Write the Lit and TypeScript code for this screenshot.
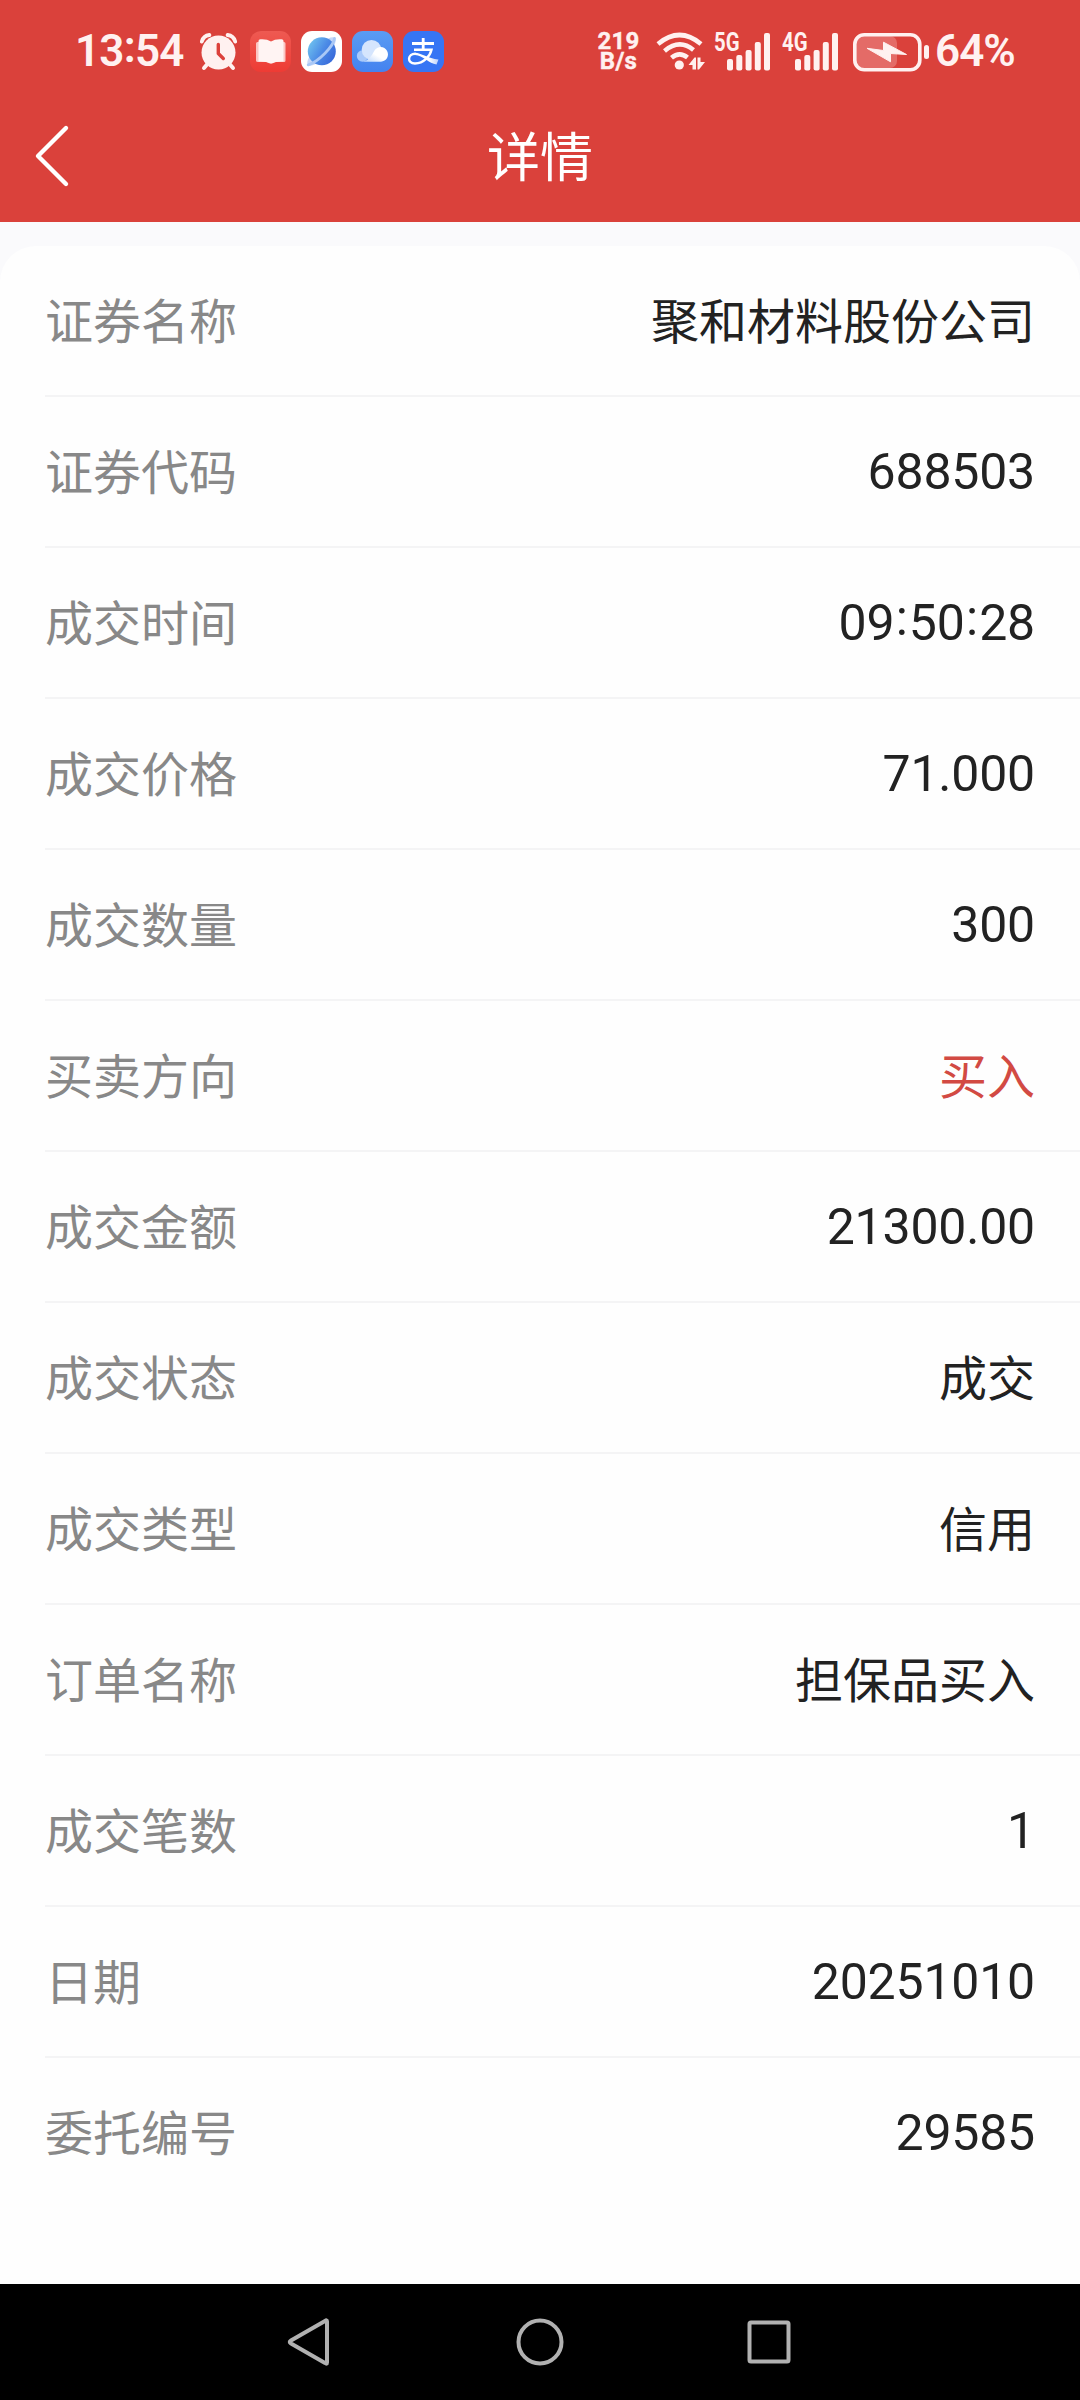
import { LitElement, html, css, svg } from "lit";
import { customElement, property } from "lit/decorators.js";
import { classMap } from "lit/directives/class-map.js";

interface Field {
  label: string;
  value: string;
  kind?: "number" | "buy";
}

const FIELDS: Field[] = [
  { label: "证券名称", value: "聚和材料股份公司" },
  { label: "证券代码", value: "688503", kind: "number" },
  { label: "成交时间", value: "09:50:28", kind: "number" },
  { label: "成交价格", value: "71.000", kind: "number" },
  { label: "成交数量", value: "300", kind: "number" },
  { label: "买卖方向", value: "买入", kind: "buy" },
  { label: "成交金额", value: "21300.00", kind: "number" },
  { label: "成交状态", value: "成交" },
  { label: "成交类型", value: "信用" },
  { label: "订单名称", value: "担保品买入" },
  { label: "成交笔数", value: "1", kind: "number" },
  { label: "日期", value: "20251010", kind: "number" },
  { label: "委托编号", value: "29585", kind: "number" },
];

// Splits a value so that each colon can be raised to the middle of the digits.
const withRaisedColons = (text: string) =>
  text.split(/(:)/).map((part) => (part === ":" ? html`<span class="colon">:</span>` : part));

@customElement("status-bar")
class StatusBar extends LitElement {
  static styles = css`
    :host {
      display: flex;
      justify-content: space-between;
      align-items: center;
      box-sizing: border-box;
      height: 91px;
      padding: 12px 65px 0 75px;
      color: #fff1f0;
      font-family: Roboto, "Liberation Sans", sans-serif;
      font-weight: 600;
    }
    .group {
      display: flex;
      align-items: center;
    }
    svg {
      display: block;
      flex: none;
    }
    .time {
      width: 125px;
      padding-bottom: 2px;
      font-size: 44px;
      line-height: 50px;
      letter-spacing: -0.8px;
      white-space: nowrap;
    }
    .colon {
      vertical-align: 4px;
      line-height: 1;
    }
    .apps {
      display: flex;
      gap: 10px;
      margin-left: 13px;
    }
    .speed {
      width: 43px;
      font-size: 24px;
      font-weight: 700;
      line-height: 20px;
      text-align: center;
      letter-spacing: 0.3px;
      padding-bottom: 1px;
      -webkit-text-stroke: 0.4px #fff1f0;
    }
    .wifi {
      margin-left: 16px;
    }
    .cell {
      margin: -10px 0 0 8px;
    }
    .cell + .cell {
      margin-left: 12px;
    }
    .battery {
      margin-left: 14px;
    }
    .percent {
      width: 80px;
      margin-left: 6px;
      padding-bottom: 1px;
      font-size: 44px;
      line-height: 52px;
      letter-spacing: -1px;
      white-space: nowrap;
    }
  `;

  private signal(name: string) {
    return html`<svg class="cell" width="56" height="50" viewBox="0 -10 56 50">
      <text x="0" y="18.800" font-size="25" font-weight="700" fill="#fff1f0" textLength="25.500" lengthAdjust="spacingAndGlyphs">${name}</text>
      ${[
        [13, 27],
        [22.3, 23],
        [31.6, 18],
        [40.8, 10],
        [50, 1],
      ].map(([x, y]) => svg`<rect x=${x} y=${y} width="6" height=${38.5 - y} rx="2" fill="#fff1f0"/>`)}
    </svg>`;
  }

  render() {
    return html`
      <div class="group">
        <span class="time">13<span class="colon">:</span>54</span>
        <svg width="37" height="38" viewBox="0 0 37 38" fill="none">
          <circle cx="18.5" cy="19.5" r="17" fill="#fff1f0" />
          <path d="M1.8 8.6A9 9 0 0 1 9.4 2M35.2 8.6A9 9 0 0 0 27.6 2" stroke="#fff1f0" stroke-width="3.8" stroke-linecap="round" />
          <path d="M7 31.5 4 35M30 31.5 33 35" stroke="#fff1f0" stroke-width="4" stroke-linecap="round" />
          <path d="M18.3 11.5V20.5L23.3 25.5" stroke="#dc413b" stroke-width="3.4" stroke-linecap="round" stroke-linejoin="round" />
        </svg>
        <div class="apps">
          <svg width="41" height="41" viewBox="0 0 41 41">
            <defs>
              <linearGradient id="book" x1="0" y1="0" x2="0" y2="1">
                <stop offset="0" stop-color="#ee5a52" />
                <stop offset="1" stop-color="#ee3b34" />
              </linearGradient>
            </defs>
            <rect width="41" height="41" rx="11" fill="url(#book)" />
            <path d="M6 12.500Q6 11 7.500 11H34Q35.500 11 35.500 12.500V29.500Q35.500 31 34 31H25Q21 34 17 31H8Q6 31 6 29.500Z" fill="#fbc6c3" />
            <path d="M8.500 10Q8.500 8 11 8.300Q17 8 21 10.500Q25 8 31 8.300Q33.500 8 33.500 10V30.500Q27 30 21 32.500Q15 30 8.500 30.500Z" fill="#fff4f3" />
          </svg>
          <svg width="41" height="41" viewBox="0 0 41 41">
            <defs>
              <linearGradient id="globe" x1="0" y1="0.2" x2="1" y2="0.8">
                <stop offset="0" stop-color="#71c4ef" />
                <stop offset="0.5" stop-color="#4c8be6" />
                <stop offset="1" stop-color="#3565d8" />
              </linearGradient>
            </defs>
            <rect width="41" height="41" rx="11" fill="#fff" />
            <ellipse cx="20.500" cy="20.500" rx="19" ry="6.500" transform="rotate(-45 20.500 20.500)" fill="#c8d8f7" />
            <circle cx="20.800" cy="20.300" r="14" fill="url(#globe)" />
            <path d="M33.500 7.500C32.500 15 18 30.500 7.200 33.800" fill="none" stroke="#a9c8f6" stroke-width="2.800" stroke-linecap="round" />
          </svg>
          <svg width="41" height="41" viewBox="0 0 41 41">
            <defs>
              <linearGradient id="sky" x1="0" y1="0" x2="0" y2="1">
                <stop offset="0" stop-color="#5a9cf3" />
                <stop offset="1" stop-color="#4482ef" />
              </linearGradient>
              <linearGradient id="puff" x1="0" y1="1" x2="1" y2="0">
                <stop offset="0" stop-color="#b6d2fb" />
                <stop offset="0.5" stop-color="#ffffff" />
              </linearGradient>
            </defs>
            <rect width="41" height="41" rx="11" fill="url(#sky)" />
            <circle cx="10.500" cy="25" r="5.700" fill="#a9c9fa" />
            <circle cx="19.500" cy="18.800" r="9.800" fill="#d5e5fd" />
            <path d="M11 30.700H29A7.300 7.300 0 1 0 22.500 19.500C19.500 25 16.500 29.500 11 30.700Z" fill="url(#puff)" />
          </svg>
          <svg width="41" height="41" viewBox="0 0 41 41" fill="none" stroke="#fff">
            <defs>
              <linearGradient id="tail" x1="0" y1="0" x2="1" y2="0">
                <stop offset="0.600" stop-color="#ffffff" />
                <stop offset="1" stop-color="#b9cffb" />
              </linearGradient>
            </defs>
            <rect width="41" height="41" rx="11" fill="#3675f4" stroke="none" />
            <path d="M9 12.500H31M20.200 7V18.500" stroke-width="2.800" />
            <path d="M11 18.700H28.500C27 25 21 32.500 12 32.500C3.500 32.500 4.500 22.500 12.500 22.800" stroke-width="2.400" />
            <path d="M12 21.700C18 21.700 25 27.500 35.500 28.500L33.500 33.500C26 32.500 20 24.500 12 24Z" fill="url(#tail)" stroke="none" />
          </svg>
        </div>
      </div>
      <div class="group">
        <div class="speed"><div>219</div><div>B/s</div></div>
        <svg class="wifi" width="50" height="40" viewBox="0 0 50 40" fill="none" stroke="#fff1f0" stroke-width="4.600">
          <path d="M2 12Q23.500 -6 45 12M8.500 19Q23.500 6.500 37.500 18M15.500 25.800Q23.500 19 31.500 25.500" />
          <circle cx="23.300" cy="33" r="4.600" fill="#fff1f0" stroke="none" />
          <path d="M32.500 33 38.500 25.500H40V37.500H36.500V33ZM41.500 25.500H44.500V30H49L43 37.500H41.500Z" fill="#fff1f0" stroke="none" />
        </svg>
        ${this.signal("5G")} ${this.signal("4G")}
        <svg class="battery" width="77" height="40" viewBox="0 0 77 40">
          <rect x="4" y="4" width="41" height="32" rx="7" fill="#e46b67" />
          <rect x="2.800" y="2.800" width="65" height="35" rx="9.500" fill="none" stroke="#fff1f0" stroke-width="3.600" />
          <rect x="72" y="13" width="5" height="14" rx="2.500" fill="#fff1f0" />
          <path d="M15 16.300 31.500 18.500V10.200L54.500 22.500 38.500 21.500V29.800Z" fill="#fff1f0" stroke="#fff1f0" stroke-width="1" stroke-linejoin="round" />
        </svg>
        <span class="percent">64%</span>
      </div>
    `;
  }
}

@customElement("detail-row")
class DetailRow extends LitElement {
  @property({ attribute: false }) field!: Field;

  static styles = css`
    :host {
      display: block;
      padding-left: 45px;
    }
    .row {
      display: flex;
      justify-content: space-between;
      align-items: center;
      box-sizing: border-box;
      height: 151px;
      padding-right: 45px;
      border-bottom: 2px solid #f4f4f5;
      font-size: 48px;
      line-height: 72px;
    }
    :host(:last-of-type) .row {
      border-bottom-color: transparent;
    }
    .label,
    .value {
      padding-bottom: 6px;
    }
    .label {
      color: #888;
    }
    .value {
      color: #222;
    }
    .number {
      padding-bottom: 0;
      font-family: Roboto, "Liberation Sans", sans-serif;
      font-size: 50px;
      letter-spacing: -0.2px;
    }
    .buy {
      color: #d24a43;
    }
    .colon {
      margin: 0 1.3px;
      vertical-align: 5px;
      line-height: 1;
    }
  `;

  render() {
    const { label, value, kind } = this.field;
    return html`<div class="row">
      <span class="label">${label}</span>
      <span class=${classMap({ value: true, number: kind === "number", buy: kind === "buy" })}>${withRaisedColons(value)}</span>
    </div>`;
  }
}

@customElement("app-root")
class AppRoot extends LitElement {
  static styles = css`
    :host {
      display: flex;
      flex-direction: column;
      width: 1080px;
      height: 2400px;
      background: #fafafc;
      font-family: "Noto Sans CJK SC", sans-serif;
    }
    svg {
      display: block;
    }
    .header {
      height: 222px;
      background: #da413b;
    }
    .titlebar {
      display: grid;
      grid-template-columns: 100px 1fr 100px;
      align-items: center;
      height: 131px;
    }
    .back {
      padding: 0 0 1px 32px;
    }
    .title {
      padding-bottom: 6px;
      color: #fff;
      font-size: 53px;
      line-height: 80px;
      text-align: center;
    }
    .card {
      flex: 1;
      margin-top: 24px;
      border-radius: 36px 36px 0 0;
      background: #fefefe;
    }
    .navbar {
      display: flex;
      justify-content: center;
      align-items: center;
      gap: 169px;
      height: 116px;
      background: #000;
    }
  `;

  render() {
    return html`
      <div class="header">
        <status-bar></status-bar>
        <div class="titlebar">
          <div class="back">
            <svg width="40" height="64" viewBox="0 0 40 64" fill="none" stroke="#fff" stroke-width="4.400" stroke-linecap="round" stroke-linejoin="round">
              <path d="M34 4 6 32 34 60" />
            </svg>
          </div>
          <div class="title">详情</div>
        </div>
      </div>
      <div class="card">${FIELDS.map((field) => html`<detail-row .field=${field}></detail-row>`)}</div>
      <div class="navbar">
        <svg width="60" height="60" viewBox="0 0 60 60" fill="none" stroke="#b1b1b1" stroke-width="4" stroke-linejoin="round">
          <path d="M46 9.500V50.500Q46 52.500 44 51L10 31.500Q7.500 30 10 28.500L44 9Q46 7.500 46 9.500Z" />
        </svg>
        <svg width="60" height="60" viewBox="0 0 60 60" fill="none" stroke="#b1b1b1" stroke-width="4">
          <circle cx="30" cy="30" r="21.500" />
        </svg>
        <svg width="60" height="60" viewBox="0 0 60 60" fill="none" stroke="#b1b1b1" stroke-width="4">
          <rect x="10.500" y="10.500" width="39" height="39" rx="1.500" />
        </svg>
      </div>
    `;
  }
}
